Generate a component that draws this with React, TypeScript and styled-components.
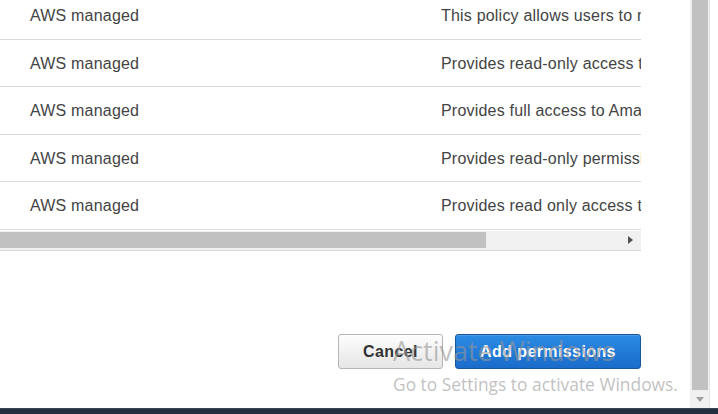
import React from 'react';
import styled, { createGlobalStyle } from 'styled-components';

const GlobalStyle = createGlobalStyle`
  html, body {
    margin: 0;
    padding: 0;
    background: #fff;
    overflow: hidden;
  }
  body {
    font-family: "Liberation Sans", Arial, sans-serif;
  }
`;

const rows = [
  { type: 'AWS managed', desc: 'This policy allows users to manage' },
  { type: 'AWS managed', desc: 'Provides read-only access to' },
  { type: 'AWS managed', desc: 'Provides full access to Amazon' },
  { type: 'AWS managed', desc: 'Provides read-only permissions' },
  { type: 'AWS managed', desc: 'Provides read only access to' },
];

const Screen = styled.div`
  position: relative;
  width: 718px;
  height: 414px;
  display: flex;
  flex-direction: column;
  overflow: hidden;
`;

const Window = styled.div`
  flex: 1;
  display: flex;
  min-height: 0;
`;

const Content = styled.div`
  width: 690px;
  display: flex;
  flex-direction: column;
`;

const TableViewport = styled.div`
  width: 641px;
  height: 251px;
  overflow: hidden;
  display: flex;
  flex-direction: column;
`;

const Rows = styled.div`
  margin-top: -8px;
`;

const Row = styled.div`
  box-sizing: border-box;
  height: 47.5px;
  padding-top: 2px;
  display: grid;
  grid-template-columns: 441px 1fr;
  align-items: center;
  border-bottom: 1px solid #d9d9d9;
  font-size: 16px;
  letter-spacing: 0.2px;
  color: #444;
  white-space: nowrap;
  overflow: hidden;
`;

const TypeCell = styled.div`
  padding-left: 30px;
`;

const DescCell = styled.div`
  overflow: hidden;
`;

const HScroll = styled.div`
  box-sizing: border-box;
  height: 22px;
  margin-top: 1px;
  background: #f0f0f0;
  border-bottom: 1px solid #d9d9d9;
  display: flex;
  align-items: center;
  padding-right: 8px;
`;

const HThumb = styled.div`
  width: 486px;
  height: 16px;
  background: #c1c1c1;
`;

const ArrowRight = styled.div`
  margin-left: auto;
  width: 0;
  height: 0;
  border-top: 4px solid transparent;
  border-bottom: 4px solid transparent;
  border-left: 5px solid #505050;
`;

const Footer = styled.div`
  width: 641px;
  display: flex;
  justify-content: flex-end;
  gap: 12px;
  margin-top: 83px;
`;

const Button = styled.button<{ $primary?: boolean }>`
  box-sizing: border-box;
  width: ${p => (p.$primary ? '186px' : '105px')};
  height: 35px;
  padding: 0;
  border-radius: 3px;
  font-family: "Liberation Sans", Arial, sans-serif;
  font-size: 16px;
  font-weight: bold;
  letter-spacing: 0.4px;
  cursor: pointer;
  border: 1px solid ${p => (p.$primary ? '#1a5596' : '#b5b5b5')};
  color: ${p => (p.$primary ? '#fff' : '#333')};
  background: ${p =>
    p.$primary
      ? 'linear-gradient(to bottom, #2b8be3 0%, #1a6ccb 100%)'
      : 'linear-gradient(to bottom, #fdfdfd 0%, #e6e6e6 100%)'};
  box-shadow: ${p => (p.$primary ? 'inset 0 1px 0 rgba(255,255,255,0.15)' : 'inset 0 1px 0 #fff')};
`;

const VScroll = styled.div`
  width: 19px;
  background: #f0f0f0;
  display: flex;
  flex-direction: column;
  align-items: center;
  padding-bottom: 6px;
  box-sizing: border-box;
`;

const VThumb = styled.div`
  width: 16px;
  flex: 1;
  background: #c1c1c1;
`;

const ArrowDown = styled.div`
  margin-top: 7px;
  width: 0;
  height: 0;
  border-left: 4px solid transparent;
  border-right: 4px solid transparent;
  border-top: 5px solid #a0a0a0;
`;

const Edge = styled.div`
  flex: 1;
  background: #fff;
  border-left: 1px solid #e4e4e4;
`;

const Taskbar = styled.div`
  height: 5px;
  background: #232f3e;
  border-top: 1px solid #394553;
`;

const Watermark = styled.div`
  position: absolute;
  left: 393px;
  top: 337px;
  font-family: "Open Sans", "Noto Sans", sans-serif;
  color: rgba(150, 150, 150, 0.6);
  pointer-events: none;
  line-height: 1;
`;

const WatermarkTitle = styled.div`
  font-size: 27px;
  margin-bottom: 12px;
`;

const WatermarkHint = styled.div`
  font-size: 17.4px;
`;

export default function App() {
  return (
    <>
      <GlobalStyle />
      <Screen>
        <Window>
          <Content>
            <TableViewport>
              <Rows>
                {rows.map((r, i) => (
                  <Row key={i}>
                    <TypeCell>{r.type}</TypeCell>
                    <DescCell>{r.desc}</DescCell>
                  </Row>
                ))}
              </Rows>
              <HScroll>
                <HThumb />
                <ArrowRight />
              </HScroll>
            </TableViewport>
            <Footer>
              <Button>Cancel</Button>
              <Button $primary>Add permissions</Button>
            </Footer>
          </Content>
          <VScroll>
            <VThumb />
            <ArrowDown />
          </VScroll>
          <Edge />
        </Window>
        <Taskbar />
        <Watermark>
          <WatermarkTitle>Activate Windows</WatermarkTitle>
          <WatermarkHint>Go to Settings to activate Windows.</WatermarkHint>
        </Watermark>
      </Screen>
    </>
  );
}
